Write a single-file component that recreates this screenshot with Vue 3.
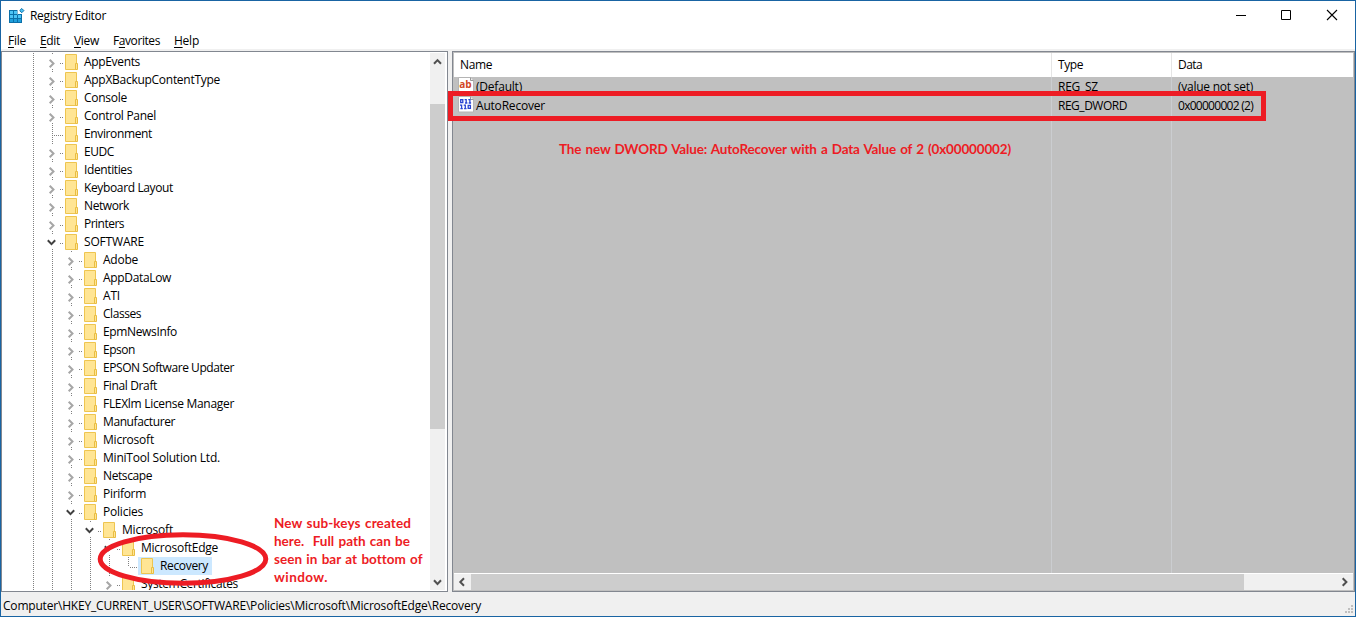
<script setup>
import { ref } from "vue";

const menus = ref([
    { before: "", key: "F", after: "ile", width: 18 },
    { before: "", key: "E", after: "dit", width: 20 },
    { before: "", key: "V", after: "iew", width: 25 },
    { before: "F", key: "a", after: "vorites", width: 47 },
    { before: "", key: "H", after: "elp", width: 25 },
]);

// state: closed / open have an arrow, leaf and last only have lines
const keys = ref([
    { name: "AppEvents", level: 0, state: "closed", width: 56 },
    { name: "AppXBackupContentType", level: 0, state: "closed", width: 136 },
    { name: "Console", level: 0, state: "closed", width: 43 },
    { name: "Control Panel", level: 0, state: "closed", width: 72 },
    { name: "Environment", level: 0, state: "leaf", width: 68 },
    { name: "EUDC", level: 0, state: "closed", width: 30 },
    { name: "Identities", level: 0, state: "closed", width: 48 },
    { name: "Keyboard Layout", level: 0, state: "closed", width: 89 },
    { name: "Network", level: 0, state: "closed", width: 45 },
    { name: "Printers", level: 0, state: "closed", width: 40 },
    { name: "SOFTWARE", level: 0, state: "open", width: 60 },
    { name: "Adobe", level: 1, state: "closed", width: 35 },
    { name: "AppDataLow", level: 1, state: "closed", width: 68 },
    { name: "ATI", level: 1, state: "closed", width: 17 },
    { name: "Classes", level: 1, state: "closed", width: 38 },
    { name: "EpmNewsInfo", level: 1, state: "closed", width: 74 },
    { name: "Epson", level: 1, state: "closed", width: 32 },
    { name: "EPSON Software Updater", level: 1, state: "closed", width: 131 },
    { name: "Final Draft", level: 1, state: "closed", width: 54 },
    { name: "FLEXlm License Manager", level: 1, state: "closed", width: 131 },
    { name: "Manufacturer", level: 1, state: "closed", width: 72 },
    { name: "Microsoft", level: 1, state: "closed", width: 51 },
    { name: "MiniTool Solution Ltd.", level: 1, state: "closed", width: 117 },
    { name: "Netscape", level: 1, state: "closed", width: 49 },
    { name: "Piriform", level: 1, state: "closed", width: 43 },
    { name: "Policies", level: 1, state: "open", width: 40 },
    { name: "Microsoft", level: 2, state: "open", width: 51 },
    { name: "MicrosoftEdge", level: 3, state: "open", width: 77 },
    { name: "Recovery", level: 4, state: "last", width: 48, selected: true },
    { name: "SystemCertificates", level: 3, state: "closed", width: 97 },
]);

const values = ref([
    { name: "(Default)", type: "REG_SZ", data: "(value not set)", kind: "text", widths: [46, 40, 75] },
    { name: "AutoRecover", type: "REG_DWORD", data: "0x00000002 (2)", kind: "binary", widths: [69, 69, 75] },
]);

const noteLines = ref([
    { text: "New sub-keys created", width: 137 },
    { text: "here.  Full path can be", width: 136 },
    { text: "seen in bar at bottom of", width: 148 },
    { text: "window.", width: 54 },
]);

// spreads the letters of a label over the given width
const vFit = {
    mounted(el, binding) {
        const natural = el.getBoundingClientRect().width;
        const count = el.textContent.length;
        el.style.letterSpacing = `${(binding.value - natural) / count}px`;
    },
};
</script>

<template>
    <div class="window">
        <header class="titlebar">
            <svg class="app-icon" width="16" height="16" viewBox="0 0 16 16">
                <rect x="0" y="2" width="13" height="13" fill="#0b6fa8" />
                <path d="M1 3h3v3H1zM5 3h3v3H5zM1 7h3v3H1zM5 7h3v3H5zM9 7h3v3H9z" fill="#4cc3f5" />
                <path d="M1 11h3v3H1zM5 11h3v3H5zM9 11h3v3H9z" fill="#1e9fdc" />
                <path d="M8.5 1.5h5v5h-5z" fill="#fff" />
                <path d="M9 6h4v1H9z" fill="#0b6fa8" />
                <path d="M12.8 0.5l2.1 2.1-2.1 2.1-2.1-2.1z" fill="#4cc3f5" stroke="#0b6fa8" />
            </svg>
            <h1><span v-fit="76">Registry Editor</span></h1>
            <div class="controls">
                <svg width="46" height="29" viewBox="0 0 46 29"><path d="M18 14.5h10" stroke="#000" /></svg>
                <svg width="45" height="29" viewBox="0 0 45 29"><path d="M17.5 9.5h9v9h-9z" fill="none" stroke="#000" /></svg>
                <svg width="46" height="29" viewBox="0 0 46 29"><path d="M18 9l10 10M28 9l-10 10" fill="none" stroke="#000" stroke-width="1.1" /></svg>
            </div>
        </header>

        <nav class="menubar">
            <span v-for="menu in menus" :key="menu.key" class="menu"><span v-fit="menu.width">{{ menu.before }}<u>{{ menu.key }}</u>{{ menu.after }}</span></span>
        </nav>

        <main class="panes">
            <section class="tree-pane">
                <ul class="tree">
                    <li v-for="(item, i) in keys" :key="i" class="tree-row">
                        <i v-for="n in item.level + 1" :key="n" class="guide"></i>
                        <svg class="node" width="22" height="18" viewBox="0 0 22 18">
                            <path v-if="item.state == 'leaf'" d="M9.5 0v18" class="dots" />
                            <path v-else-if="item.state == 'last'" d="M9.5 0v10" class="dots" />
                            <path v-else d="M9.5 0v1M9.5 16v1" class="dots" />
                            <path v-if="item.state == 'leaf' || item.state == 'last'" d="M11 10.5h10" class="dots" />
                            <path v-else d="M17 10.5h4" class="dots" />
                            <path v-if="item.state == 'closed'" d="M6.7 6.7l3.8 3.8-3.8 3.8" class="arrow" />
                            <path v-if="item.state == 'open'" d="M4.8 7.3l3.7 3.8 3.7-3.8" class="arrow open" />
                        </svg>
                        <span class="key" :class="{ selected: item.selected }">
                            <svg width="13" height="18" viewBox="0 0 13 18">
                                <path d="M0.5 1.5h11v15H0.5z" fill="#ffe594" stroke="#eec550" />
                                <path d="M10.5 10.5h2v6h-2z" fill="#ffe594" stroke="#e9bd42" />
                            </svg>
                            <span class="label"><span v-fit="item.width">{{ item.name }}</span></span>
                        </span>
                    </li>
                </ul>
                <div class="vscroll">
                    <svg width="15" height="17" viewBox="0 0 15 17"><path d="M4 10.8l3.5-3.7 3.5 3.7" class="scroll-arrow" /></svg>
                    <div class="vthumb"></div>
                    <svg width="15" height="17" viewBox="0 0 15 17"><path d="M4 7.3l3.5 3.7 3.5-3.7" class="scroll-arrow" /></svg>
                </div>
            </section>

            <section class="list-pane">
                <div class="columns head">
                    <span><b v-fit="32">Name</b></span>
                    <span><b v-fit="25">Type</b></span>
                    <span><b v-fit="24">Data</b></span>
                </div>
                <div class="values">
                    <div v-for="value in values" :key="value.name" class="columns value">
                        <span>
                            <svg class="value-icon" width="16" height="18" viewBox="0 0 16 18">
                                <path d="M0.5 0.5h12l3 3v12.5H0.5z" fill="#fff" stroke="#b4b4b4" />
                                <path d="M12.5 0.5v3h3" fill="#eee" stroke="#999" />
                                <text v-if="value.kind == 'text'" x="1.3" y="11" class="ab" textLength="12.4" lengthAdjust="spacingAndGlyphs">ab</text>
                                <g v-else fill="none" stroke="#2945d2" stroke-width="1.3">
                                    <path d="M2.7 3.7h2.1v3H2.7zM6.6 3.6h1.6v3.5M10.3 3.6h1.6v3.5M7 7h2.4M10.7 7h2.4" />
                                    <path d="M2 9.2h1.6v3.5M5.7 9.2h1.6v3.5M2.4 12.6h2.4M6.1 12.6h2.4M10.2 9.3h2.2v3.1h-2.2z" />
                                </g>
                            </svg>
                            <b v-fit="value.widths[0]">{{ value.name }}</b>
                        </span>
                        <span><b v-fit="value.widths[1]">{{ value.type }}</b></span>
                        <span><b v-fit="value.widths[2]">{{ value.data }}</b></span>
                    </div>
                    <div class="columns filler"><span></span><span></span><span></span></div>
                </div>
                <div class="hscroll">
                    <svg width="17" height="16" viewBox="0 0 17 16"><path d="M10 4.3L6.3 8l3.7 3.7" class="scroll-arrow" /></svg>
                    <div class="hthumb"></div>
                    <svg width="17" height="16" viewBox="0 0 17 16"><path d="M6.7 4.3L10.4 8l-3.7 3.7" class="scroll-arrow" /></svg>
                </div>
            </section>
        </main>

        <footer class="statusbar">
            <span v-fit="478">Computer\HKEY_CURRENT_USER\SOFTWARE\Policies\Microsoft\MicrosoftEdge\Recovery</span>
            <svg width="10" height="10" viewBox="0 0 10 10">
                <path d="M6 0h2v2H6zM3 3h2v2H3zM6 3h2v2H6zM0 6h2v2H0zM3 6h2v2H3zM6 6h2v2H6z" fill="#bfbfbf" />
            </svg>
        </footer>

        <div class="highlight"></div>
        <p class="note note-value"><span v-fit="452">The new DWORD Value: AutoRecover with a Data Value of 2 (0x00000002)</span></p>
        <svg class="ring" width="180" height="60" viewBox="0 0 180 60">
            <ellipse cx="90" cy="30" rx="82.8" ry="24.3" fill="none" stroke="#ed1c24" stroke-width="5" />
        </svg>
        <div class="note note-keys">
            <p v-for="line in noteLines" :key="line.text"><span v-fit="line.width">{{ line.text }}</span></p>
        </div>
    </div>
</template>

<style>
body {
    margin: 0;
    overflow: hidden;
}
</style>

<style scoped>
.window {
    position: relative;
    box-sizing: border-box;
    display: flex;
    flex-direction: column;
    width: 1356px;
    height: 617px;
    overflow: hidden;
    border: 1px solid #1964a3;
    background: #fff;
    color: #000;
    font-family: "Open Sans", "Noto Sans", sans-serif;
    font-size: 12px;
    line-height: 18px;
    white-space: pre;
}

.window svg {
    display: block;
    flex: none;
}

.titlebar {
    display: flex;
    align-items: center;
    height: 30px;
    padding-left: 8px;
}

.titlebar h1 {
    flex: 1;
    margin: 0 0 0 5px;
    font-size: 12px;
    font-weight: 400;
}

.controls {
    display: flex;
    align-self: flex-start;
}

.menubar {
    display: flex;
    box-sizing: border-box;
    height: 20px;
    padding-left: 7px;
    gap: 14px;
    border-bottom: 2px solid #f0f0f0;
    line-height: 20px;
}

.menu u {
    text-underline-offset: 2px;
    text-decoration-thickness: 1px;
}

.panes {
    display: flex;
    height: 541px;
    background: #f0f0f0;
}

.tree-pane {
    display: flex;
    box-sizing: border-box;
    width: 447px;
    margin-right: 4px;
    padding: 1px 2px 1px 0;
    border: 1px solid #828790;
    background: #fff;
}

.tree {
    flex: 1;
    margin: 0;
    padding: 0 0 0 22px;
    overflow: hidden;
    list-style: none;
}

.tree-row {
    display: flex;
    height: 18px;
}

.guide {
    flex: none;
    width: 19px;
    background: repeating-linear-gradient(#808080 0 1px, transparent 1px 2px) 9px 0 / 1px 100% no-repeat;
}

.dots {
    fill: none;
    stroke: #808080;
    stroke-dasharray: 1 1;
}

.arrow {
    fill: none;
    stroke: #a6a6a6;
    stroke-width: 2;
}

.arrow.open {
    stroke: #404040;
}

.key {
    display: flex;
    margin-left: -3px;
    padding-left: 3px;
}

.label {
    padding: 0 4px 0 6px;
}

.selected {
    background: #cce8ff;
}

.vscroll {
    display: flex;
    flex-direction: column;
    width: 15px;
    background: #f0f0f0;
}

.vthumb {
    height: 325px;
    margin: 34px 0 auto;
    background: #cdcdcd;
}

.scroll-arrow {
    fill: none;
    stroke: #505050;
    stroke-width: 2;
}

.list-pane {
    display: flex;
    flex: 1;
    flex-direction: column;
    min-width: 0;
    padding: 1px;
    border: 1px solid #828790;
    background: #c0c0c0;
}

.columns {
    display: grid;
    grid-template-columns: 598px 120px 1fr;
}

.columns > span {
    display: flex;
    box-sizing: border-box;
    padding-left: 6px;
    border-right: 1px solid #cbcdd0;
}

.columns > span:last-child {
    border-right: 0;
}

.columns b {
    font-weight: 400;
}

.head {
    height: 24px;
    background: #fff;
    line-height: 24px;
}

.head > span {
    border-color: #e5e5e5;
}

.values {
    display: flex;
    flex: 1;
    flex-direction: column;
}

.value {
    height: 19px;
    line-height: 20px;
}

.value > span:first-child {
    padding-left: 4px;
}

.value-icon {
    margin-right: 2px;
}

.ab {
    fill: #d24726;
    font-size: 11px;
    font-weight: 700;
}

.filler {
    flex: 1;
}

.hscroll {
    display: flex;
    height: 16px;
    border-top: 1px solid #fff;
    background: #f0f0f0;
}

.hthumb {
    width: 773px;
    margin-right: auto;
    background: #cdcdcd;
}

.statusbar {
    display: flex;
    flex: 1;
    align-items: flex-end;
    justify-content: space-between;
    padding: 0 0 1px 2px;
    background: #f0f0f0;
    line-height: 18px;
}

.highlight {
    position: absolute;
    top: 90px;
    left: 447px;
    box-sizing: border-box;
    width: 818px;
    height: 30px;
    border: 5px solid #ed1c24;
}

.note {
    position: absolute;
    margin: 0;
    color: #ed1c24;
    font-family: Lato, sans-serif;
    font-size: 13.5px;
    font-weight: 700;
    word-spacing: 1px;
}

.note p {
    margin: 0;
}

.note-value {
    top: 139px;
    left: 558px;
}

.note-keys {
    top: 513px;
    left: 273px;
}

.ring {
    position: absolute;
    top: 528px;
    left: 92px;
}
</style>
